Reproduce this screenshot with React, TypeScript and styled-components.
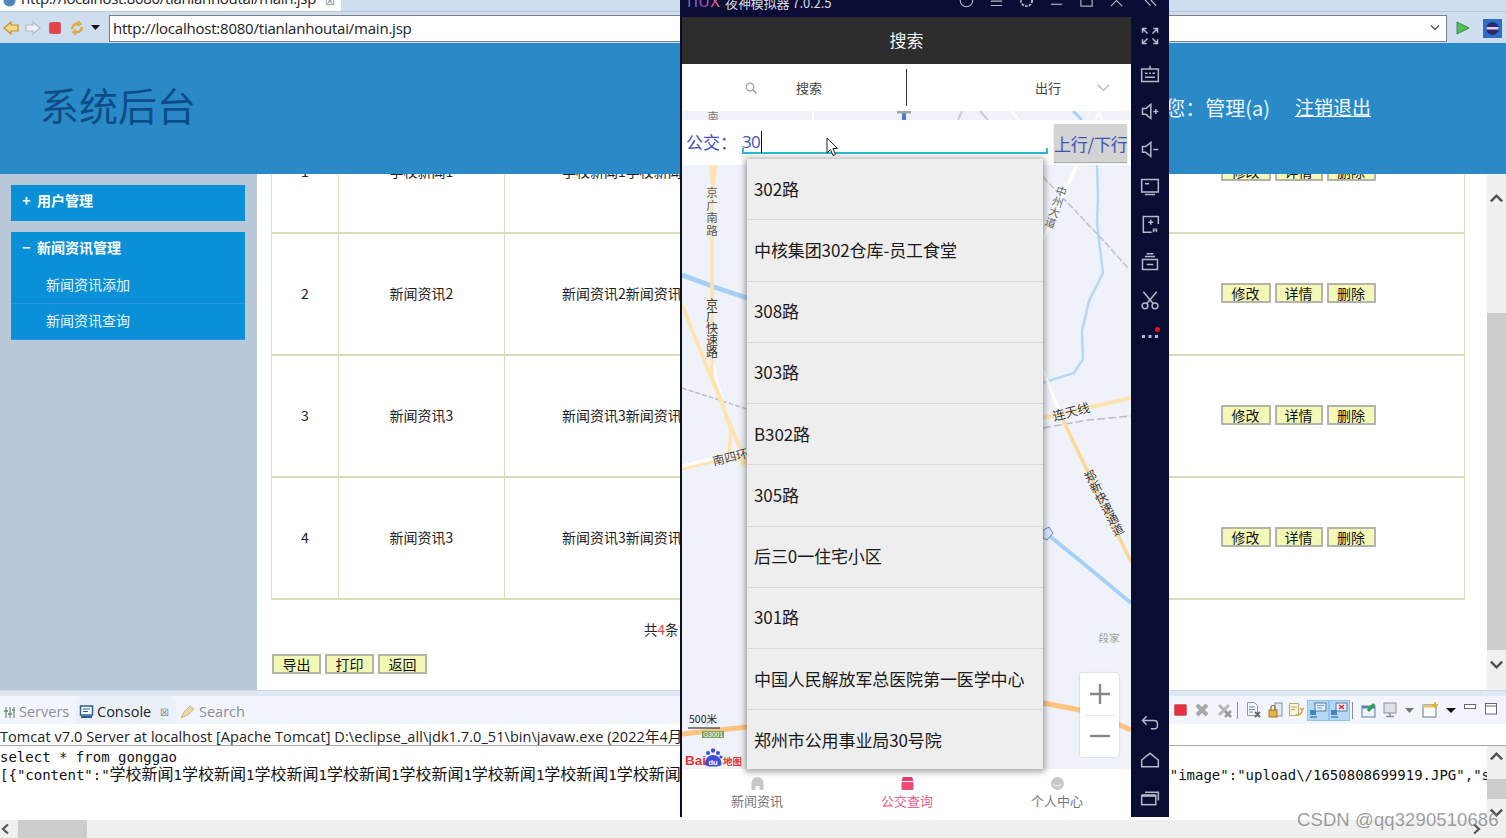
import React from "react";
import styled, { createGlobalStyle } from "styled-components";

const CJK = `"Noto Sans CJK SC", sans-serif`;
const UI = `"Open Sans", "Noto Sans CJK SC", sans-serif`;

const Global = createGlobalStyle`
  html, body { margin: 0; padding: 0; background: #fff; overflow: hidden; }
  * { box-sizing: border-box; }
`;

const Root = styled.div`
  position: relative; width: 1506px; height: 838px; overflow: hidden;
  display: flex; flex-direction: column; font-family: ${CJK}; color: #000; background: #fff;
`;

/* ---------- browser chrome ---------- */
const BrowserTabs = styled.div`
  height: 12px; flex: none; background: #cfdeee; overflow: hidden; display: flex; border-bottom: 1px solid #b9c6d6;
`;
const BrowserTab = styled.div`
  width: 341px; height: 12px; background: #fff; display: flex; gap: 5px; padding-left: 3px;
  font: 15px/15px ${UI}; color: #222; letter-spacing: -.3px;
  span { margin-top: -9px; white-space: nowrap; }
  svg { margin-top: -6px; flex: none; }
  i { font-style: normal; font-size: 11px; margin: -7px 0 0 4px; color: #777; }
`;
const AddressBar = styled.div`
  height: 31px; flex: none; background: #cfdeee; display: flex; align-items: center; padding: 1px 0 0 3px;
`;
const NavIcons = styled.div`
  width: 106px; flex: none; display: flex; align-items: center; gap: 6px;
`;
const UrlBox = styled.div`
  width: 1338px; height: 27px; background: #fff; border: 1px solid #7b7f87; display: flex; align-items: center;
  justify-content: space-between; padding: 0 6px 0 3px; font: 15px ${UI}; color: #222; letter-spacing: -.22px;
`;
const GoIcons = styled.div`
  display: flex; align-items: center; gap: 13px; padding-left: 9px;
`;

/* ---------- site ---------- */
const SiteHeader = styled.header`
  height: 131px; flex: none; background: #2a8ac8; display: flex; align-items: center; justify-content: space-between;
  padding: 0 135px 8px 40px; color: #fff;
`;
const SiteTitle = styled.h1`
  margin: 0; font: 400 39px/1 ${CJK}; color: #0d4c86;
`;
const UserBox = styled.div`
  display: flex; gap: 25px; padding-top: 6px; font: 400 19px/1.2 ${CJK}; color: #eaf4fb;
  span { font-size: 20px; line-height: 23px; }
  a { color: #fff; text-decoration: underline; }
`;
const Workspace = styled.div`
  height: 516px; flex: none; display: flex; overflow: hidden; background: #fff;
`;
const SideMenu = styled.nav`
  width: 257px; flex: none; background: #b8c8d8; padding: 11px; display: flex; flex-direction: column; gap: 11px;
`;
const MenuGroup = styled.div`
  width: 234px; background: #0a90d6;
`;
const MenuHead = styled.div`
  height: 36px; display: flex; align-items: center; gap: 6px; padding: 0 0 6px 11px;
  font: 700 14px/1 ${CJK}; color: #fff;
  b { width: 9px; text-align: center; font-weight: 700; }
`;
const MenuItem = styled.div`
  height: 36px; display: flex; align-items: center; padding: 0 0 4px 35px; border-bottom: 1px solid #2f8fe6;
  font: 400 14px/1 ${CJK}; color: #e8f6ff;
`;
const Content = styled.main`
  flex: 1; min-width: 0; overflow: hidden; padding-left: 14px; margin-right: 22px;
`;
const Table = styled.div`
  width: 1194px; margin-top: -62px; border-left: 1px solid #d8dcb8; border-right: 1px solid #d8dcb8;
`;
const Row = styled.div`
  height: 122px; display: grid; grid-template-columns: 67px 166px 628px 1fr; border-bottom: 2px solid #d8dcb8;
`;
const Cell = styled.div<{ $left?: boolean }>`
  border-right: 1px solid #d8dcb8; display: flex; align-items: center; overflow: hidden; white-space: nowrap;
  font: 400 14px/1 ${CJK}; color: #222; padding-bottom: 2px;
  justify-content: ${(p) => (p.$left ? "flex-start" : "center")};
  padding-left: ${(p) => (p.$left ? "57px" : "0")};
  &:last-child { border-right: 0; }
`;
const Actions = styled.div`
  display: flex; gap: 4px; padding-right: 1px;
`;
const ActionBtn = styled.button<{ $w: number }>`
  width: ${(p) => p.$w}px; height: 20px; padding: 0; background: #f5f9b8; border: 2px solid #b4b4a8;
  font: 400 14px/1 ${CJK}; color: #111;
`;
const Footer = styled.div`
  height: 30px; margin-top: 14px; padding-left: 373px; font: 400 13.5px/30px ${CJK}; color: #222;
  em { color: #e44; font-style: normal; }
`;
const FootActions = styled.div`
  display: flex; gap: 4px; margin-top: 10px; padding-left: 1px;
`;
const VScroll = styled.div`
  width: 19px; flex: none; background: #f0f0f0; display: flex; flex-direction: column; align-items: center; position: relative;
`;
const MainThumb = styled.div`
  width: 19px; height: 337px; background: #cdcdcd; margin-top: 139px;
`;
const SmallThumb = styled.div`
  width: 19px; height: 20px; background: #cdcdcd; margin-top: 33px;
`;
const ArrowBox = styled.div<{ $top?: number; $bottom?: number }>`
  position: absolute; left: 2px; ${(p) => (p.$top !== undefined ? `top:${p.$top}px;` : `bottom:${p.$bottom}px;`)}
  display: flex;
`;

/* ---------- eclipse views ---------- */
const Sash = styled.div`
  height: 6px; flex: none; background: #dfe8f2; border-top: 1px solid #cfd8e3;
`;
const PanelTabs = styled.div`
  height: 28px; flex: none; background: #f2f6fc; display: flex; align-items: stretch; justify-content: space-between;
`;
const TabGroup = styled.div`
  display: flex; align-items: stretch;
`;
const PanelTab = styled.div<{ $w: number; $active?: boolean }>`
  width: ${(p) => p.$w}px; display: flex; align-items: center; gap: 3px; padding: 4px 0 0 3px;
  font: 400 14.5px/1 ${UI};
  color: ${(p) => (p.$active ? "#222" : "#8a8f96")};
  background: ${(p) => (p.$active ? "#eaf1fb" : "transparent")};
  border-radius: 6px 6px 0 0;
  i { font-style: normal; font-size: 10px; color: #666; margin-left: 6px; }
`;
const ViewTools = styled.div`
  display: flex; align-items: center; padding-right: 5px;
`;
const ToolCell = styled.div<{ $w?: number; $on?: boolean }>`
  width: ${(p) => p.$w ?? 21.5}px; height: 21px; display: flex; align-items: center; justify-content: center;
  background: ${(p) => (p.$on ? "#b5d8f7" : "transparent")};
  border: ${(p) => (p.$on ? "1px solid #8fc4ee" : "0")};
`;
const ToolSep = styled.div`
  width: 1px; height: 17px; background: #8a8f96; margin: 0 5px 0 2px;
`;
const ConsoleTitle = styled.div`
  height: 22px; flex: none; background: #fff; border-bottom: 1px solid #a9a9a9; padding-top: 3px;
  font: 400 14.5px/20px ${UI}; color: #222; white-space: nowrap; letter-spacing: .06px; overflow: hidden;
`;
const ConsoleArea = styled.div`
  height: 74px; flex: none; display: flex; background: #fff;
`;
const ConsoleText = styled.div`
  flex: 1; min-width: 0; overflow: hidden; padding-top: 2px; font: 400 14px/18px "DejaVu Sans Mono", ${CJK}; color: #111;
`;
const ConsoleLine = styled.div`
  height: 18px; white-space: nowrap; display: flex; justify-content: space-between; overflow: hidden;
  > span:last-child:not(:first-child) { flex: none; margin-right: -3px; }
`;
const CjkRun = styled.span`
  font: 400 16px/0 ${CJK};
`;
const HScroll = styled.div`
  height: 18px; flex: none; background: #f0f0f0; display: flex; align-items: center;
`;
const HThumb = styled.div`
  width: 69px; height: 18px; background: #cdcdcd; margin-left: 6px;
`;
const HRight = styled.div`
  margin-left: auto; padding-right: 24px; display: flex;
`;
const Watermark = styled.div`
  position: absolute; left: 1297px; top: 808px; font: 400 18.5px/24px "Liberation Sans", sans-serif; color: rgba(120,120,120,.72); white-space: nowrap; letter-spacing: .1px;
`;

/* ---------- emulator window ---------- */
const Emulator = styled.section`
  position: absolute; left: 680px; top: 0; width: 489px; height: 817px; background: #0a0d33;
  display: flex; flex-direction: column; padding-left: 2px;
`;
const EmuTitle = styled.div`
  height: 17px; flex: none; display: flex; align-items: center; overflow: hidden; color: #d8d9e2;
  font: 400 13px/1 ${CJK};
`;
const NoxLogo = styled.div`
  width: 43px; padding-left: 5px; flex: none; margin-top: -18px; font: 400 20px/1 "Liberation Sans", sans-serif; letter-spacing: .5px;
  background: linear-gradient(90deg,#3f67d8,#d040a0 70%,#f0a040); -webkit-background-clip: text; background-clip: text; color: transparent;
`;
const EmuName = styled.span`
  margin-top: -13px; white-space: nowrap; width: 226px; flex: none; letter-spacing: -.1px;
`;
const EmuWinIcons = styled.div`
  display: flex; margin-top: -16px;
`;
const EmuWinCell = styled.div<{ $w?: number }>`
  width: ${(p) => p.$w ?? 30}px; display: flex; justify-content: center;
`;
const EmuBody = styled.div`
  flex: 1; min-height: 0; display: flex;
`;
const Phone = styled.div`
  width: 449px; flex: none; display: flex; flex-direction: column; background: #fff; position: relative;
`;
const AppBar = styled.div`
  height: 47px; flex: none; background: #2d2d2d; color: #f4f4f4; display: flex; align-items: center; justify-content: center;
  font: 400 17px/1 ${CJK}; padding-bottom: 2px;
`;
const SearchTabs = styled.div`
  height: 47px; flex: none; background: #fff; display: flex; font: 400 13px/1 ${CJK}; color: #444;
`;
const SearchHalf = styled.div<{ $pl: number; $gap: number }>`
  width: 224px; flex: none; display: flex; align-items: center; padding-left: ${(p) => p.$pl}px; gap: ${(p) => p.$gap}px;
`;
const VDivider = styled.div`
  width: 1px; height: 37px; background: #333; margin-top: 5px; flex: none;
`;
const MapArea = styled.div`
  flex: 1; min-height: 0; position: relative; background: #eff3f9;
  > svg.map { display: block; }
`;
const BusBar = styled.div`
  position: absolute; left: 0; right: 0; top: 9px; height: 45px; background: #fff; display: flex; padding-left: 4px;
  color: #3f51b5; font: 400 17px/1 ${CJK};
`;
const BusLabel = styled.div`
  width: 56px; flex: none; padding-top: 13px;
`;
const BusInput = styled.div`
  width: 306px; height: 34px; flex: none; padding-top: 13px; border-bottom: 2px solid #2cb8d6; position: relative; font-family: ${UI}; letter-spacing: -.6px;
  &::before, &::after { content: ""; position: absolute; bottom: 0; width: 2px; height: 4px; background: #2cb8d6; }
  &::before { left: 0; } &::after { right: 0; }
  i { position: absolute; left: 19px; top: 11px; width: 1px; height: 22px; background: #111; }
`;
const BusBtn = styled.button`
  width: 73px; height: 38px; margin: 4px 0 0 6px; padding: 0; border: 0; background: #d3d3d3; color: #3f51b5; white-space: nowrap; overflow: hidden;
  font: 400 17px/1 ${CJK}; letter-spacing: -.2px; text-align: left; box-shadow: 0 1px 1px #aaa;
`;
const Cursor = styled.svg`
  position: absolute; left: 144px; top: 26px;
`;
const Suggest = styled.ul`
  position: absolute; left: 65px; top: 48px; width: 296px; height: 610px; margin: 0; padding: 0; list-style: none;
  background: #eee; box-shadow: 0 1px 6px 2px rgba(60,60,60,.45);
`;
const SuggestItem = styled.li`
  height: 61.25px; display: flex; align-items: center; padding: 0 0 2px 7px; border-bottom: 1.5px solid #d9d9d9;
  font: 400 17px/1 ${CJK}; color: #1a1a1a; white-space: nowrap; letter-spacing: -.1px;
  &:last-child { border-bottom: 0; height: 58.75px; padding-bottom: 0; }
`;
const Zoom = styled.div`
  position: absolute; left: 398px; top: 562px; width: 39px; height: 84px; background: #fff; border-radius: 2px; box-shadow: 0 0 2px rgba(0,0,0,.25);
  display: flex; flex-direction: column; align-items: center;
`;
const ZoomBtn = styled.div`
  flex: 1; width: 30px; display: flex; align-items: center; justify-content: center;
  & + & { border-top: 1px solid #e6e6e6; }
`;
const BottomNav = styled.div`
  height: 48px; flex: none; background: #fff; display: grid; grid-template-columns: repeat(3, 150px);
`;
const NavItem = styled.div<{ $on?: boolean }>`
  display: flex; flex-direction: column; align-items: center; padding-top: 8px; gap: 3px;
  font: 400 13px/16px ${CJK}; color: ${(p) => (p.$on ? "#e8608a" : "#777")};
  svg { display: block; }
`;
const EmuSide = styled.aside`
  width: 38px; flex: none; display: flex; flex-direction: column; align-items: center;
`;
const SideCell = styled.div`
  height: 37.7px; width: 38px; display: flex; align-items: center; justify-content: center; position: relative; flex: none;
`;
const SideFill = styled.div`
  flex: 1;
`;
const RedDot = styled.i`
  position: absolute; right: 9px; top: 8px; width: 5px; height: 5px; border-radius: 50%; background: #f01010;
`;

/* ---------- drawings ---------- */
const EI: React.FC<{ children: React.ReactNode; w?: number; sw?: number }> = ({ children, w = 20, sw = 1.8 }) => (
  <svg width={w} height={w} viewBox="0 0 24 24" fill="none" stroke="#b6b8c6" strokeWidth={sw}>{children}</svg>
);

const Chevron: React.FC<{ up?: boolean; c?: string; w?: number }> = ({ up, c = "#505050", w = 15 }) => (
  <svg width={w} height={w} viewBox="0 0 16 16" fill="none" stroke={c} strokeWidth="2.6">
    <path d={up ? "M2 11 8 5l6 6" : "M2 5l6 6 6-6"} />
  </svg>
);

const Tool: React.FC<{ children: React.ReactNode }> = ({ children }) => (
  <svg width="18" height="18" viewBox="0 0 18 18">{children}</svg>
);

const MapLabel: React.FC<{ t: string; x: number; y: number; r?: number; s?: number; c?: string; v?: boolean; ls?: number }> = ({
  t, x, y, r = 0, s = 12, c = "#4a4a4a", v, ls = 0,
}) => (
  <text
    x={x}
    y={y}
    fontFamily={CJK}
    fontSize={s}
    fill={c}
    textAnchor="middle"
    dominantBaseline="central"
    letterSpacing={ls}
    stroke="#fff"
    strokeWidth="0.3"
    paintOrder="stroke"
    transform={r ? `rotate(${r} ${x} ${y})` : undefined}
    style={v ? { writingMode: "vertical-rl" } : undefined}
  >
    {t}
  </text>
);

const MapDrawing = () => (
  <svg className="map" width="449" height="658" viewBox="682 111 449 658" fill="none">
    {/* strip above the bus bar */}
    <path d="M813 111v9M1011 111l8 9M1096 120l3-9 3 9" stroke="#fff" strokeWidth="2" />
    <path d="M962 111l-4 9M980 111l8 9" stroke="#c8ccd2" strokeWidth="2" />
    <path d="M1073 111l9 9" stroke="#a7d0f7" strokeWidth="3" />
    {/* rivers */}
    <path d="M682 275l22 8 10 4 33 11" stroke="#a7d0f7" strokeWidth="5" />
    <path d="M1097 165l1 30-1 28 6 50-14 28-7 30 1 28-9 14-32 10" stroke="#b4d8f8" strokeWidth="2.500" />
    <path d="M1047 534l42 34 42 35" stroke="#a7d0f7" strokeWidth="4" />
    {/* rail */}
    <path d="M682 388l65 21" stroke="#b8bcc2" strokeWidth="1.500" strokeDasharray="5 2" />
    <path d="M1043 177l60 63 25 28" stroke="#c0c4ca" strokeWidth="1.500" strokeDasharray="7 2" />
    <path d="M1043 428l45-8 43-4" stroke="#b8bcc2" strokeWidth="1.500" strokeDasharray="8 3" />
    {/* white roads */}
    <path d="M1043 240l34-75" stroke="#fff" strokeWidth="3" />
    <path d="M1043 370l20 50" stroke="#fff" strokeWidth="3" />
    <path d="M712 360l12 50" stroke="#fff" strokeWidth="3" />
    {/* yellow roads */}
    <path d="M709 165h8l-2 22h-4z" fill="#fde3ae" />
    <path d="M712 187v190l12 30" stroke="#fde3ae" strokeWidth="3.500" />
    <path d="M682 305l41 102 24 58" stroke="#fde3ae" strokeWidth="3.500" />
    <path d="M722 405l9 25-2 22 18 14" stroke="#fde3ae" strokeWidth="3.500" />
    <path d="M682 467l65-16" stroke="#fff" strokeWidth="5" />
    <path d="M682 469l65-15" stroke="#fde3ae" strokeWidth="2.500" />
    <path d="M1043 418l88-20" stroke="#fde3ae" strokeWidth="4" />
    <path d="M1063 420l24 50 14 30 30 62" stroke="#fbd898" strokeWidth="3.500" />
    {/* highway */}
    <path d="M682 734l65-7" stroke="#ffc27f" strokeWidth="5" />
    <path d="M1043 703l37 7 20 6 31 14" stroke="#ffc27f" strokeWidth="5" />
    {/* labels */}
    <MapLabel t="南" x={713} y={116} s={11} c="#777" />
    <MapLabel t="京广南路" x={712} y={212} s={11.5} v c="#555" ls={1} />
    <MapLabel t="京广快速路" x={712} y={328} s={12} v c="#333" />
    <MapLabel t="南四环" x={730} y={456} r={-14} s={12} />
    <MapLabel t="连天线" x={1071} y={411} r={-14} s={12.5} c="#333" />
    <MapLabel t="郑新快速通道" x={1104} y={503} r={-27} s={12} v c="#333" />
    <MapLabel t="中州大道" x={1056} y={207} r={19} s={11} v c="#666" />
    <MapLabel t="段家" x={1109} y={637} s={10.5} c="#999" />
    {/* top stub */}
    <path d="M904 111v9" stroke="#4a76d8" strokeWidth="4" />
    <rect x="897" y="111" width="14" height="2.500" fill="#a0a4ae" />
    {/* small marker */}
    <path d="M1043 530l6-3 4 6-6 7-4-2z" fill="#dfe9fa" stroke="#5b84c8" />
    {/* scale */}
    <text x="689" y="723" fontFamily={CJK} fontSize="10.500" fill="#222">500米</text>
    <path d="M688 728h32" stroke="#111" strokeWidth="1" />
    <rect x="702" y="731" width="22" height="7" fill="#7aa65c" />
    <text x="713" y="737" textAnchor="middle" fontFamily="Liberation Sans" fontSize="6.500" fill="#fff">G3001</text>
    {/* baidu */}
    <text x="685" y="765" fontFamily="Liberation Sans" fontWeight="700" fontSize="13.500" fill="#e03a3a">Bai</text>
    <g fill="#3a50d8">
      <circle cx="713" cy="750.500" r="2.200" /><circle cx="708" cy="753" r="2" /><circle cx="718" cy="753" r="2" /><circle cx="721" cy="757" r="1.600" />
      <path d="M705 764c0-6 4-9 8-9s8.500 3 8.500 9c0 2-4 2.500-8.500 2.500s-8-.5-8-2.500z" />
    </g>
    <text x="713" y="765" textAnchor="middle" fontFamily="Liberation Sans" fontWeight="700" fontSize="7.500" fill="#fff">du</text>
    <text x="723" y="765" fontFamily={CJK} fontSize="9.500" fontWeight="700" fill="#e03a3a">地图</text>
  </svg>
);

const items = ["302路","中核集团302仓库-员工食堂","308路","303路","B302路","305路","后三0一住宅小区","301路","中国人民解放军总医院第一医学中心","郑州市公用事业局30号院"];
const news = [
  { n: "1", t: "学校新闻1", c: "学校新闻1学校新闻1学校新闻1" },
  { n: "2", t: "新闻资讯2", c: "新闻资讯2新闻资讯2新闻资讯2" },
  { n: "3", t: "新闻资讯3", c: "新闻资讯3新闻资讯3新闻资讯3" },
  { n: "4", t: "新闻资讯3", c: "新闻资讯3新闻资讯3新闻资讯3" },
];

export default function App() {
  return (
    <Root>
      <Global />
      <BrowserTabs>
        <BrowserTab>
          <svg width="13" height="13" viewBox="0 0 14 14"><circle cx="7" cy="7" r="6.500" fill="#4f87b8" /><path d="M3 3c3-1 5 1 4 3S3 7 3 3z" fill="#7ea86a" /></svg>
          <span>http://localhost:8080/tianlanhoutai/main.jsp</span>
          <i>☒</i>
        </BrowserTab>
      </BrowserTabs>
      <AddressBar>
        <NavIcons>
          <svg width="16" height="16" viewBox="0 0 16 16"><path d="M1 8l7-6v3h7v6H8v3z" fill="#f6d886" stroke="#c89020" strokeWidth="1.200" /></svg>
          <svg width="16" height="16" viewBox="0 0 16 16"><path d="M15 8L8 2v3H1v6h7v3z" fill="#eef1f5" stroke="#b4b8be" strokeWidth="1.200" /></svg>
          <svg width="16" height="16" viewBox="0 0 16 16"><rect x="2.500" y="2.500" width="11" height="11" rx="1.500" fill="#e8404a" stroke="#c0606a" /></svg>
          <svg width="16" height="16" viewBox="0 0 16 16" fill="none" stroke="#e0a838" strokeWidth="2.400"><path d="M3 9c0-3 3-6 7-5M13 7c0 3-3 6-7 5" /><path d="M9 1l3 3-3 2M7 15l-3-3 3-2" strokeWidth="1.600" /></svg>
          <svg width="9" height="6" viewBox="0 0 9 6"><path d="M0 0h9L4.500 5z" fill="#111" /></svg>
        </NavIcons>
        <UrlBox>
          <span>http://localhost:8080/tianlanhoutai/main.jsp</span>
          <svg width="10" height="8" viewBox="0 0 10 8" fill="none" stroke="#444" strokeWidth="1.200"><path d="M1 1.500l4 4 4-4" /></svg>
        </UrlBox>
        <GoIcons>
          <svg width="14" height="14" viewBox="0 0 14 14"><path d="M1 1l12 6-12 6z" fill="#5cb85c" stroke="#3a8a4a" /></svg>
          <svg width="19" height="19" viewBox="0 0 19 19"><rect width="19" height="19" fill="#2a6fc8" /><circle cx="9.500" cy="9.500" r="6.500" fill="#2a2a6a" /><path d="M3.500 8h12v2.500h-12z" fill="#e0d0f0" /></svg>
        </GoIcons>
      </AddressBar>
      <SiteHeader>
        <SiteTitle>系统后台</SiteTitle>
        <UserBox>
          <span>欢迎您：管理(a)</span>
          <a>注销退出</a>
        </UserBox>
      </SiteHeader>
      <Workspace>
        <SideMenu>
          <MenuGroup><MenuHead><b>+</b>用户管理</MenuHead></MenuGroup>
          <MenuGroup>
            <MenuHead><b>−</b>新闻资讯管理</MenuHead>
            <MenuItem>新闻资讯添加</MenuItem>
            <MenuItem>新闻资讯查询</MenuItem>
          </MenuGroup>
        </SideMenu>
        <Content>
          <Table>
            {news.map((r) => (
              <Row key={r.n}>
                <Cell>{r.n}</Cell>
                <Cell>{r.t}</Cell>
                <Cell $left>{r.c}</Cell>
                <Cell>
                  <Actions>
                    <ActionBtn $w={50}>修改</ActionBtn>
                    <ActionBtn $w={48}>详情</ActionBtn>
                    <ActionBtn $w={49}>删除</ActionBtn>
                  </Actions>
                </Cell>
              </Row>
            ))}
          </Table>
          <Footer>共<em>4</em>条</Footer>
          <FootActions>
            <ActionBtn $w={49}>导出</ActionBtn>
            <ActionBtn $w={49}>打印</ActionBtn>
            <ActionBtn $w={49}>返回</ActionBtn>
          </FootActions>
        </Content>
        <VScroll>
          <ArrowBox $top={17}><Chevron up /></ArrowBox>
          <MainThumb />
          <ArrowBox $bottom={18}><Chevron /></ArrowBox>
        </VScroll>
      </Workspace>
      <Sash />
      <PanelTabs>
        <TabGroup>
          <PanelTab $w={76}>
            <svg width="13" height="13" viewBox="0 0 13 13" stroke="#8aa08a" strokeWidth="1.500"><path d="M3 1v11M7 1v11M11 1v11" /><path d="M1 5h4M5 8h4M9 4h3" stroke="#6a8a6a" /></svg>
            Servers
          </PanelTab>
          <PanelTab $w={100} $active>
            <svg width="15" height="14" viewBox="0 0 15 14"><rect x="1.500" y="1" width="12" height="9" fill="#fff" stroke="#2c5c94" strokeWidth="1.500" /><path d="M4 4h7M4 6.500h5" stroke="#2c5c94" /><path d="M2 12h11" stroke="#2c5c94" strokeWidth="2" /></svg>
            Console<i>☒</i>
          </PanelTab>
          <PanelTab $w={70}>
            <svg width="17" height="16" viewBox="0 0 17 16"><path d="M2 14l3-6 6-6 4 3-6 6z" fill="#ead9a8" stroke="#c9b98a" /></svg>
            Search
          </PanelTab>
        </TabGroup>
        <ViewTools>
          <ToolCell><Tool><rect x="2.500" y="3.500" width="12" height="11" rx="1" fill="#e8303c" stroke="#d06a72" /></Tool></ToolCell>
          <ToolCell><Tool><path d="M4 4l10 10M14 4L4 14" stroke="#a8a8a8" strokeWidth="4" /></Tool></ToolCell>
          <ToolCell><Tool><path d="M4 4l10 10M14 4L4 14" stroke="#b8b8b8" strokeWidth="3" /><path d="M10 10l6 6M16 10l-6 6" stroke="#999" strokeWidth="2.500" /></Tool></ToolCell>
          <ToolSep />
          <ToolCell><Tool><path d="M3.500 1.500h7l3 3v10h-10z" fill="#f6f8fb" stroke="#8a98a8" /><path d="M5 6h6M5 8.500h6M5 11h4" stroke="#6a88b0" /><path d="M11 11l5 5M16 11l-5 5" stroke="#666" strokeWidth="1.800" /></Tool></ToolCell>
          <ToolCell><Tool><rect x="9" y="2" width="7" height="13" fill="#e4eaf2" stroke="#7a90a8" /><rect x="3" y="9" width="8" height="7" fill="#e3b04a" stroke="#a87820" /><path d="M5 9V6.500a2 2 0 014 0V9" fill="none" stroke="#8a6a30" strokeWidth="1.200" /></Tool></ToolCell>
          <ToolCell><Tool><path d="M2.500 2.500h9v12h-9z" fill="#f7f3df" stroke="#b8a878" /><path d="M4 6h6M4 8.500h4" stroke="#c0a860" /><path d="M9 14c4 0 6-2 6-5M13 7l2 2 2-2" fill="none" stroke="#d8a838" strokeWidth="1.600" /></Tool></ToolCell>
          <ToolCell $on><Tool><rect x="6" y="2" width="11" height="8" fill="#e6eff8" stroke="#5a7a9a" /><path d="M8 4.500h7M8 7h5" stroke="#7a9ac0" /><rect x="1" y="9" width="6" height="5" fill="#4a84b8" /><path d="M1 16h7" stroke="#4a84b8" strokeWidth="1.500" /></Tool></ToolCell>
          <ToolCell $on><Tool><rect x="6" y="2" width="11" height="8" fill="#e6eff8" stroke="#5a7a9a" /><path d="M9 4l5 4M14 4L9 8" stroke="#e02c30" strokeWidth="1.600" /><rect x="1" y="9" width="6" height="5" fill="#4a84b8" /><path d="M1 16h7" stroke="#4a84b8" strokeWidth="1.500" /></Tool></ToolCell>
          <ToolSep />
          <ToolCell><Tool><rect x="2" y="5" width="13" height="11" fill="#eef3f9" stroke="#5a7a9a" /><path d="M2 5h13v2.500H2z" fill="#5a86ae" /><path d="M8 10l6-7" stroke="#2e9a3a" strokeWidth="3" /></Tool></ToolCell>
          <ToolCell><Tool><rect x="3" y="2" width="12" height="10" fill="#dfe3e6" stroke="#8a9098" /><path d="M9 12v3M5 15.500h8" stroke="#8a9098" strokeWidth="1.500" /></Tool></ToolCell>
          <ToolCell $w={17}><svg width="9" height="5" viewBox="0 0 9 5"><path d="M0 0h9L4.500 5z" fill="#777" /></svg></ToolCell>
          <ToolCell $w={24}><Tool><rect x="2" y="4" width="13" height="12" fill="#fff" stroke="#5a7a9a" /><path d="M2 4h13v2.500H2z" fill="#e6c45c" /><path d="M14 1v6M11 4h6" stroke="#e6b030" strokeWidth="1.800" /></Tool></ToolCell>
          <ToolCell $w={17}><svg width="10" height="5" viewBox="0 0 10 5"><path d="M0 0h10L5 5z" fill="#111" /></svg></ToolCell>
          <ToolCell $w={21}><svg width="12" height="12" viewBox="0 0 12 12"><rect x=".5" y=".5" width="11" height="4" fill="#fff" stroke="#667" /></svg></ToolCell>
          <ToolCell $w={21}><svg width="12" height="14" viewBox="0 0 12 14"><rect x=".5" y=".5" width="11" height="10.500" fill="#fff" stroke="#667" /><path d="M0 3h12" stroke="#667" /></svg></ToolCell>
        </ViewTools>
      </PanelTabs>
      <ConsoleTitle>Tomcat v7.0 Server at localhost [Apache Tomcat] D:\eclipse_all\jdk1.7.0_51\bin\javaw.exe (2022年4月24日 下午9:31:12)</ConsoleTitle>
      <ConsoleArea>
        <ConsoleText>
          <ConsoleLine><span>select * from gonggao</span></ConsoleLine>
          <ConsoleLine>
            <span>[{'{'}"content":"<CjkRun>学校新闻</CjkRun>1<CjkRun>学校新闻</CjkRun>1<CjkRun>学校新闻</CjkRun>1<CjkRun>学校新闻</CjkRun>1<CjkRun>学校新闻</CjkRun>1<CjkRun>学校新闻</CjkRun>1<CjkRun>学校新闻</CjkRun>1<CjkRun>学校新闻</CjkRun></span>
            <span>"image":"upload\/1650808699919.JPG","s</span>
          </ConsoleLine>
        </ConsoleText>
        <VScroll>
          <ArrowBox $top={3}><Chevron up /></ArrowBox>
          <SmallThumb />
          <ArrowBox $bottom={0}><Chevron /></ArrowBox>
        </VScroll>
      </ConsoleArea>
      <HScroll>
        <svg width="12" height="12" viewBox="0 0 12 12" fill="none" stroke="#555" strokeWidth="2.200"><path d="M8 1.500 3 6l5 4.500" /></svg>
        <HThumb />
        <HRight>
          <svg width="12" height="12" viewBox="0 0 12 12" fill="none" stroke="#555" strokeWidth="2.200"><path d="M4 1.500 9 6l-5 4.500" /></svg>
        </HRight>
      </HScroll>
      <Watermark>CSDN @qq3290510686</Watermark>
      <Emulator>
        <EmuTitle>
          <NoxLogo>nox</NoxLogo>
          <EmuName>夜神模拟器 7.0.2.5</EmuName>
          <EmuWinIcons>
            <EmuWinCell><EI w={15}><circle cx="12" cy="12" r="10" /></EI></EmuWinCell>
            <EmuWinCell><EI w={15}><path d="M3 6h18M3 13h18M3 20h18" /></EI></EmuWinCell>
            <EmuWinCell><EI w={15}><circle cx="12" cy="12" r="9" strokeDasharray="4 2" strokeWidth="3" /></EI></EmuWinCell>
            <EmuWinCell><EI w={15}><path d="M3 18h18" /></EI></EmuWinCell>
            <EmuWinCell><EI w={15}><rect x="3" y="3" width="18" height="18" /></EI></EmuWinCell>
            <EmuWinCell><EI w={15}><path d="M3 3l18 18M21 3L3 21" /></EI></EmuWinCell>
            <EmuWinCell $w={38}><EI w={15}><path d="M12 4l-8 8 8 8M21 4l-8 8 8 8" /></EI></EmuWinCell>
          </EmuWinIcons>
        </EmuTitle>
        <EmuBody>
          <Phone>
            <AppBar>搜索</AppBar>
            <SearchTabs>
              <SearchHalf $pl={63} $gap={39}>
                <svg width="12" height="12" viewBox="0 0 12 12" fill="none" stroke="#aaa" strokeWidth="1.400"><circle cx="5" cy="5" r="3.800" /><path d="M8 8l3.500 3.500" strokeWidth="1.800" /></svg>
                <span>搜索</span>
              </SearchHalf>
              <VDivider />
              <SearchHalf $pl={128} $gap={36}>
                <span>出行</span>
                <svg width="13" height="8" viewBox="0 0 13 8" fill="none" stroke="#bbb" strokeWidth="1.400"><path d="M1 1l5.500 5.500L12 1" /></svg>
              </SearchHalf>
            </SearchTabs>
            <MapArea>
              <MapDrawing />
              <BusBar>
                <BusLabel>公交：</BusLabel>
                <BusInput>30<i /></BusInput>
                <BusBtn>上行/下行</BusBtn>
              </BusBar>
              <Cursor width="13" height="20" viewBox="0 0 13 20">
                <path d="M1 1v15l3.500-3.500 2.500 6 2.500-1-2.500-6H11.500z" fill="#fff" stroke="#222" />
              </Cursor>
              <Suggest>
                {items.map((s) => <SuggestItem key={s}>{s}</SuggestItem>)}
              </Suggest>
              <Zoom>
                <ZoomBtn><svg width="22" height="22" viewBox="0 0 22 22"><path d="M11 1v20M1 11h20" stroke="#888" strokeWidth="2.400" /></svg></ZoomBtn>
                <ZoomBtn><svg width="22" height="22" viewBox="0 0 22 22"><path d="M1 11h20" stroke="#888" strokeWidth="2.400" /></svg></ZoomBtn>
              </Zoom>
            </MapArea>
            <BottomNav>
              <NavItem>
                <svg width="13" height="13" viewBox="0 0 13 13"><path d="M6.500 0C3 0 .5 3 .5 6v7h4V9h4v4h4V6c0-3-2.500-6-6-6z" fill="#c8c8c8" /></svg>
                新闻资讯
              </NavItem>
              <NavItem $on>
                <svg width="13" height="13" viewBox="0 0 13 13"><path d="M2 0h9l1.500 4H.5z" fill="#e83a6a" /><rect x=".5" y="5" width="12" height="8" rx="1" fill="#ee4a78" /></svg>
                公交查询
              </NavItem>
              <NavItem>
                <svg width="13" height="13" viewBox="0 0 13 13"><circle cx="6.500" cy="6.500" r="6.500" fill="#c8c8c8" /><path d="M3 7c1 2.500 6 2.500 7 0" stroke="#eee" strokeWidth="1.200" fill="none" /></svg>
                个人中心
              </NavItem>
            </BottomNav>
          </Phone>
          <EmuSide>
            <SideCell><EI><path d="M9 9L3 3m0 5V3h5M15 9l6-6m0 5V3h-5M9 15l-6 6m0-5v5h5M15 15l6 6m0-5v5h-5" /></EI></SideCell>
            <SideCell><EI><rect x="2" y="6" width="20" height="15" /><path d="M6 11h3M11 11h2M15 11h3M6 16h12M12 6V2" /></EI></SideCell>
            <SideCell><EI><path d="M3 9v7h4l6 5V4L7 9zM16 12.500h6M19 9.500v6" /></EI></SideCell>
            <SideCell><EI><path d="M3 9v7h4l6 5V4L7 9zM16 12.500h6" /></EI></SideCell>
            <SideCell><EI><rect x="2" y="3" width="20" height="15" /><path d="M6 21h12M6 8h5" /></EI></SideCell>
            <SideCell><EI><path d="M22 12V3H4v19h10M13 7v6M10 10h6" /><path d="M16 22v-4h4v4M16 20h4" strokeWidth="1.300" /></EI></SideCell>
            <SideCell><EI><rect x="3" y="9" width="18" height="12" /><path d="M6 5.500h12M8 2h8M8 15h8" /></EI></SideCell>
            <SideCell><EI><circle cx="6" cy="19" r="3.500" /><circle cx="18" cy="19" r="3.500" /><path d="M8 16.500L20 2M16 16.500L4 2" /></EI></SideCell>
            <SideCell><svg width="16" height="4" viewBox="0 0 16 4" fill="#b6b8c6"><rect x="0" y="0" width="3" height="3" /><rect x="6.500" y="0" width="3" height="3" /><rect x="13" y="0" width="3" height="3" /></svg><RedDot /></SideCell>
            <SideFill />
            <SideCell><EI><path d="M8 4L3 9l5 5M3 9h14a4 4 0 014 4v2a4 4 0 01-4 4h-4" /></EI></SideCell>
            <SideCell><EI><path d="M2 12L12 4l10 8v8H2z" /></EI></SideCell>
            <SideCell><EI><rect x="2" y="9" width="17" height="11" /><path d="M6 5h16v10" /><path d="M2 9h17" strokeWidth="3" /></EI></SideCell>
          </EmuSide>
        </EmuBody>
      </Emulator>
    </Root>
  );
}
